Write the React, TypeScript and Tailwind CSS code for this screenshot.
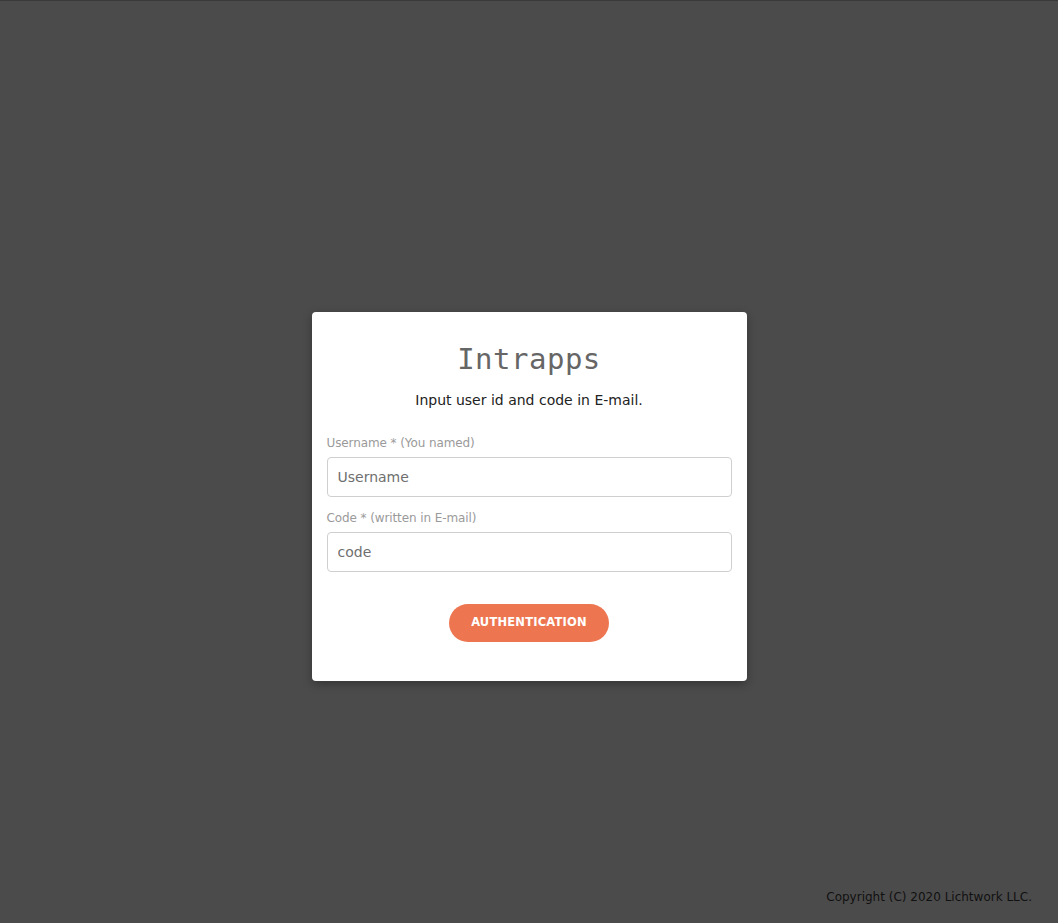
const sans = { fontFamily: '"DejaVu Sans", "Open Sans", sans-serif' };

const Field = ({ label, placeholder }: { label: string; placeholder: string }) => (
  <div className="flex flex-col">
    <label className="text-[12px] leading-[15px] text-[#9a9a9a] mb-[6px] tracking-[-0.1px]">{label}</label>
    <input
      className="h-[40px] w-full rounded-[4px] border border-[#cfcfcf] bg-white px-[10px] text-[14px] text-[#555] placeholder:text-[#6f6f6f] outline-none"
      placeholder={placeholder}
    />
  </div>
);

const App = () => {
  return (
    <div
      className="min-h-[923px] flex flex-col bg-[#4b4b4b] border-t border-[#3a3a3a]"
      style={{ fontFamily: '"DejaVu Sans", "Open Sans", sans-serif' }}
    >
      <div className="flex-1 flex justify-center pt-[311px]">
        <div className="w-[435px] h-[369px] bg-white rounded-[4px] shadow-[0_3px_10px_rgba(0,0,0,0.3)] px-[15px] pt-[30px] flex flex-col">
          <h1
            className="text-center text-[29px] leading-[34px] text-[#666] tracking-[0.5px]"
            style={{ fontFamily: '"DejaVu Sans Mono", "Liberation Mono", monospace' }}
          >
            Intrapps
          </h1>
          <p className="mt-[15px] text-center text-[14px] leading-[18px] text-[#222]" style={sans}>
            Input user id and code in E-mail.
          </p>
          <div className="mt-[27px] flex flex-col gap-[14px]">
            <Field label="Username * (You named)" placeholder="Username" />
            <Field label="Code * (written in E-mail)" placeholder="code" />
          </div>
          <div className="mt-[32px] flex justify-center">
            <button className="h-[38px] w-[160px] rounded-full bg-[#ed7651] text-white text-[11.5px] font-bold tracking-[0.2px]">
              AUTHENTICATION
            </button>
          </div>
        </div>
      </div>
      <footer className="flex justify-end pr-[26px] pb-[18px] pt-[5px]">
        <span className="text-[12px] leading-[16px] text-[#111]">Copyright (C) 2020 Lichtwork LLC.</span>
      </footer>
    </div>
  );
};

export default App;
